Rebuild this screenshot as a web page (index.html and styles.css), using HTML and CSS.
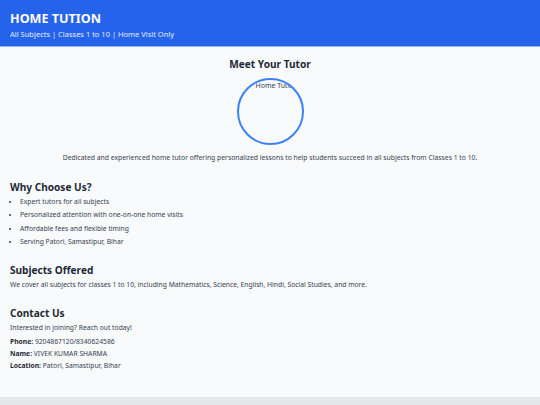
FILE: index.html
```html
<!DOCTYPE html>
<html>
<head>
<meta charset="utf-8">
<link rel="stylesheet" href="styles.css">
</head>
<body>
<header class="top">
  <h1 class="brand">HOME TUTION</h1>
  <p class="tagline">All Subjects | Classes 1 to 10 | Home Visit Only</p>
</header>
<main class="page">
  <section class="tutor">
    <h2 class="tutor-title">Meet Your Tutor</h2>
    <div class="photo"><span class="photo-alt">Home Tutor</span></div>
    <p class="tutor-desc">Dedicated and experienced home tutor offering personalized lessons to help students succeed in all subjects from Classes 1 to 10.</p>
  </section>
  <section class="block">
    <h2 class="block-title">Why Choose Us?</h2>
    <ul class="points">
      <li>Expert tutors for all subjects</li>
      <li>Personalized attention with one-on-one home visits</li>
      <li>Affordable fees and flexible timing</li>
      <li>Serving Patori, Samastipur, Bihar</li>
    </ul>
  </section>
  <section class="block">
    <h2 class="block-title">Subjects Offered</h2>
    <p class="text">We cover all subjects for classes 1 to 10, including Mathematics, Science, English, Hindi, Social Studies, and more.</p>
  </section>
  <section class="block contact">
    <h2 class="block-title">Contact Us</h2>
    <p class="text intro">Interested in joining? Reach out today!</p>
    <p class="text"><strong>Phone:</strong> 9204867120/8340624586</p>
    <p class="text"><strong>Name:</strong> VIVEK KUMAR SHARMA</p>
    <p class="text"><strong>Location:</strong> Patori, Samastipur, Bihar</p>
  </section>
</main>
<footer class="foot"></footer>
</body>
</html>
```
FILE: styles.css
```css
* { box-sizing: border-box; }
html, body { margin: 0; padding: 0; }
body {
  font-family: "Noto Sans", "Open Sans", sans-serif;
  background: #f8fafc;
  color: #1f2937;
}
.top {
  background: #2563eb;
  color: #fff;
  padding: 10px 10px 9px;
  height: 47px;
  border-bottom: 1px solid #93b4f5;
}
.brand {
  margin: 0;
  font-size: 12.6px;
  line-height: 17px;
  font-weight: 700;
}
.tagline {
  margin: 2px 0 0;
  font-size: 7.5px;
  line-height: 10px;
  color: #e6edfd;
}
.page {
  padding: 10px 10px 20px;
  height: 350px;
}
.tutor {
  text-align: center;
}
.tutor-title {
  margin: 0;
  padding-top: 0;
  font-size: 10.1px;
  line-height: 14px;
  font-weight: 700;
}
.photo {
  width: 67px;
  height: 67px;
  margin: 7px auto 0;
  border: 2px solid #3b82f6;
  border-radius: 50%;
  overflow: hidden;
  text-align: left;
}
.photo-alt {
  display: block;
  font-size: 7px;
  line-height: 10px;
  color: #374151;
  margin-top: 1px;
  padding-left: 17px;
  white-space: nowrap;
}
.tutor-desc {
  margin: 8px 0 0;
  font-size: 6.8px;
  line-height: 10px;
  color: #374151;
}
.block {
  margin-top: 15.5px;
}
.tutor + .block {
  margin-top: 17px;
}
.block.contact {
  margin-top: 16.5px;
}
.block-title {
  margin: 0 0 3px;
  font-size: 10.1px;
  line-height: 14px;
  font-weight: 700;
}
.block-title + .text {
  margin-top: 1px;
}
.points {
  margin: 0;
  padding-left: 10px;
}
.points li {
  font-size: 6.75px;
  line-height: 10px;
  margin-bottom: 3.4px;
  color: #374151;
}
.text {
  margin: 0 0 2px;
  font-size: 6.75px;
  line-height: 10px;
  color: #374151;
}
.text.intro { margin-bottom: 3.5px; }
.text strong { color: #1f2937; }
.foot {
  background: #e5e7eb;
  height: 8px;
}
```
